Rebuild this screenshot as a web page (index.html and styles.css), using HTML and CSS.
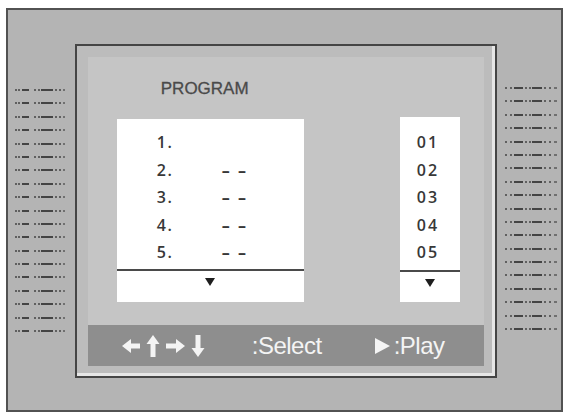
FILE: index.html
```html
<!DOCTYPE html>
<html lang="en">
<head>
<meta charset="utf-8">
<title>Program</title>
<link rel="stylesheet" href="styles.css">
</head>
<body>
<div class="screen">
  <div class="side side-left">
    <i class="dots"></i><i class="dots"></i><i class="dots"></i><i class="dots"></i><i class="dots"></i>
    <i class="dots"></i><i class="dots"></i><i class="dots"></i><i class="dots"></i><i class="dots"></i>
    <i class="dots"></i><i class="dots"></i><i class="dots"></i><i class="dots"></i><i class="dots"></i>
    <i class="dots"></i><i class="dots"></i><i class="dots"></i><i class="dots"></i>
  </div>

  <div class="frame">
    <div class="panel">
      <div class="title">PROGRAM</div>

      <div class="lists">
        <div class="list list-tracks">
          <ul class="rows">
            <li><span class="num">1.</span><span class="val"></span></li>
            <li><span class="num">2.</span><span class="val">– –</span></li>
            <li><span class="num">3.</span><span class="val">– –</span></li>
            <li><span class="num">4.</span><span class="val">– –</span></li>
            <li><span class="num">5.</span><span class="val">– –</span></li>
          </ul>
          <div class="more"><span class="tri"></span></div>
        </div>

        <div class="list list-slots">
          <ul class="rows">
            <li>01</li>
            <li>02</li>
            <li>03</li>
            <li>04</li>
            <li>05</li>
          </ul>
          <div class="more"><span class="tri"></span></div>
        </div>
      </div>

      <div class="help">
        <svg class="keys" width="84" height="22" viewBox="0 0 84 22">
          <!-- left -->
          <rect x="6" y="8.5" width="12" height="5"/>
          <polygon points="0,11 9,4 9,18"/>
          <!-- up -->
          <rect x="28.5" y="7" width="5" height="15"/>
          <polygon points="31,0 24.5,9 37.5,9"/>
          <!-- right -->
          <rect x="44" y="8.5" width="12" height="5"/>
          <polygon points="63,11 54,4 54,18"/>
          <!-- down -->
          <rect x="73.5" y="0" width="5" height="15"/>
          <polygon points="76,22 69.5,13 82.5,13"/>
        </svg>
        <span class="label label-select">:Select</span>
        <span class="play-icon"></span>
        <span class="label label-play">:Play</span>
      </div>
    </div>
  </div>

  <div class="side side-right">
    <i class="dots"></i><i class="dots"></i><i class="dots"></i><i class="dots"></i><i class="dots"></i>
    <i class="dots"></i><i class="dots"></i><i class="dots"></i><i class="dots"></i><i class="dots"></i>
    <i class="dots"></i><i class="dots"></i><i class="dots"></i><i class="dots"></i><i class="dots"></i>
    <i class="dots"></i><i class="dots"></i><i class="dots"></i><i class="dots"></i>
  </div>
</div>
</body>
</html>
```

FILE: styles.css
```css
* { box-sizing: border-box; }

html, body {
  margin: 0;
  padding: 0;
  background: #ffffff;
}

body {
  width: 565px;
  height: 415px;
  overflow: hidden;
  font-family: "Liberation Sans", Arial, sans-serif;
}

/* outer bezel */
.screen {
  margin: 8px 2px 0 6px;
  width: 557px;
  height: 404px;
  border: 2px solid #525252;
  background: #b4b4b4;
  display: flex;
  align-items: flex-start;
  padding-top: 34px;
}

/* fine print columns on both sides */
.side {
  display: flex;
  flex-direction: column;
  gap: 11.4px;
}

.side-left {
  width: 67px;
  padding: 45px 0 0 7px;
}

.side-right {
  width: 64px;
  padding: 43px 0 0 8px;
}

.dots {
  display: block;
  height: 2px;
}

.side-left .dots {
  width: 50px;
  background: linear-gradient(90deg,
    #606060 0 2px, transparent 2px 3px,
    #606060 3px 5px, transparent 5px 7px,
    #444444 7px 14px, transparent 14px 19px,
    #606060 19px 21px, transparent 21px 23px,
    #606060 23px 25px, transparent 25px 26px,
    #444444 26px 38px, transparent 38px 40px,
    #606060 40px 42px, transparent 42px 44px,
    #606060 44px 46px, transparent 46px 48px,
    #707070 48px 50px);
}

.side-right .dots {
  width: 52px;
  background: linear-gradient(90deg,
    #606060 0 2px, transparent 2px 5px,
    #606060 5px 7px, transparent 7px 9px,
    #444444 9px 18px, transparent 18px 20px,
    #606060 20px 22px, transparent 22px 24px,
    #606060 24px 26px, transparent 26px 27px,
    #444444 27px 37px, transparent 37px 39px,
    #606060 39px 41px, transparent 41px 44px,
    #606060 44px 46px, transparent 46px 49px,
    #707070 49px 51px);
}

/* menu window */
.frame {
  width: 424px;
  height: 334px;
  border: 2px solid #454545;
  background: #bcbcbc;
  padding: 11px;
  box-shadow: inset -3px -3px 0 #e6e6e6;
}

.panel {
  height: 309px;
  background: #c5c5c5;
  display: flex;
  flex-direction: column;
}

.title {
  margin: 22px 0 0 73px;
  font-size: 17px;
  line-height: 20px;
  color: #4a4a4a;
  -webkit-text-stroke: 0.3px #4a4a4a;
}

.lists {
  display: flex;
  align-items: flex-start;
  margin: 20px 0 0 29px;
  gap: 96px;
}

.list {
  background: #ffffff;
  display: flex;
  flex-direction: column;
  font-family: "Open Sans", "DejaVu Sans", sans-serif;
  font-size: 16px;
  font-weight: 600;
  color: #383838;
  letter-spacing: 1.5px;
}

.rows {
  list-style: none;
  margin: 0;
  border-bottom: 2px solid #4a4a4a;
}

.rows li {
  height: 27.5px;
  line-height: 27.5px;
  display: flex;
}

.list-tracks {
  width: 187px;
  height: 183px;
}

.list-tracks .rows {
  height: 152px;
  padding: 10px 0 0 40px;
}

.list-tracks .num {
  width: 65px;
}

.list-tracks .val {
  letter-spacing: 2px;
  font-weight: 700;
}

.list-slots {
  width: 60px;
  height: 185px;
  margin-top: -2px;
}

.list-slots .rows {
  height: 155px;
  padding: 12px 0 0 17px;
  letter-spacing: 2px;
}

.more {
  display: flex;
  justify-content: center;
  padding-top: 7px;
}

.tri {
  width: 0;
  height: 0;
  border-left: 5.5px solid transparent;
  border-right: 5.5px solid transparent;
  border-top: 8px solid #1e1e1e;
}

/* key help bar */
.help {
  margin-top: auto;
  height: 41px;
  background: #8e8e8e;
  display: flex;
  align-items: center;
  padding-left: 34px;
  color: #f4f4f4;
}

.keys {
  fill: #f4f4f4;
  flex: none;
}

.label {
  font-size: 24px;
  letter-spacing: -0.5px;
  line-height: 41px;
}

.label-select {
  margin-left: 46px;
}

.play-icon {
  margin-left: 53px;
  width: 0;
  height: 0;
  border-top: 8.5px solid transparent;
  border-bottom: 8.5px solid transparent;
  border-left: 15px solid #f4f4f4;
}

.label-play {
  margin-left: 4px;
}
```
